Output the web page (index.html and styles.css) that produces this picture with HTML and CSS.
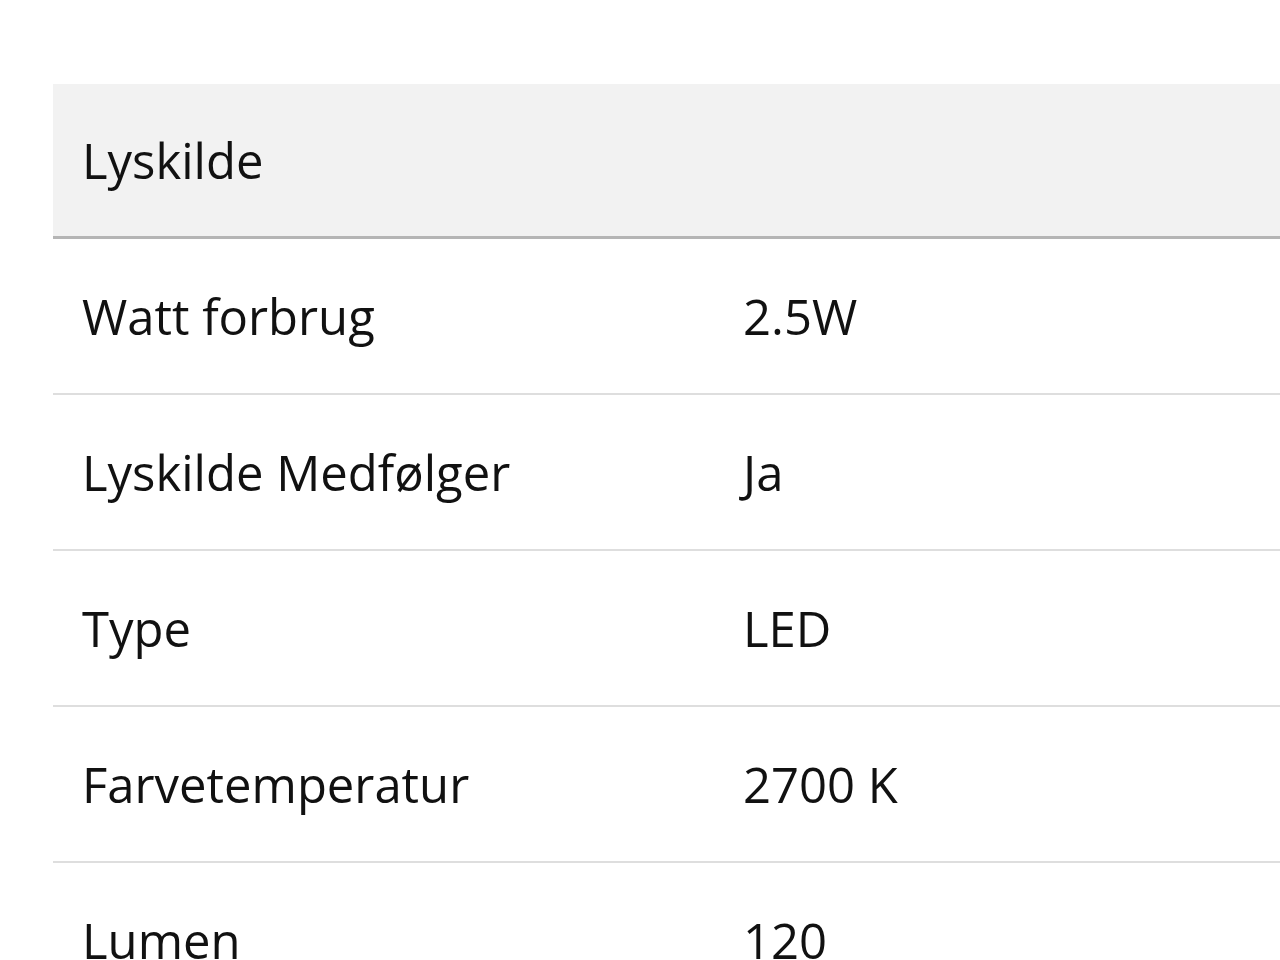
FILE: index.html
```html
<!DOCTYPE html>
<html lang="da">
<head>
<meta charset="utf-8">
<title>Lyskilde</title>
<link rel="stylesheet" href="styles.css">
</head>
<body>
<div class="page">
  <table class="specs">
    <thead>
      <tr><th colspan="2">Lyskilde</th></tr>
    </thead>
    <tbody>
      <tr><td class="label">Watt forbrug</td><td>2.5W</td></tr>
      <tr><td class="label">Lyskilde Medfølger</td><td>Ja</td></tr>
      <tr><td class="label">Type</td><td>LED</td></tr>
      <tr><td class="label">Farvetemperatur</td><td>2700 K</td></tr>
      <tr><td class="label">Lumen</td><td>120</td></tr>
    </tbody>
  </table>
</div>
</body>
</html>
```
FILE: styles.css
```css
html, body {
  margin: 0;
  padding: 0;
  background: #fff;
  overflow: hidden;
}
.page {
  padding: 84px 0 0 53px;
  width: 1280px;
  height: 960px;
  box-sizing: border-box;
  overflow: hidden;
}
.specs {
  width: 1260px;
  border-collapse: collapse;
  font-family: "Open Sans", sans-serif;
  font-size: 49px;
  color: #111;
}
.specs th {
  background: #f2f2f2;
  text-align: left;
  font-weight: 400;
  height: 153px;
  padding: 0 0 0 29px;
  border-bottom: 3px solid #b5b5b5;
  box-sizing: border-box;
}
.specs td {
  height: 154px;
  padding: 0;
  border-bottom: 2px solid #dedede;
  vertical-align: middle;
}
.specs td.label {
  width: 661px;
  padding-left: 29px;
}
```
